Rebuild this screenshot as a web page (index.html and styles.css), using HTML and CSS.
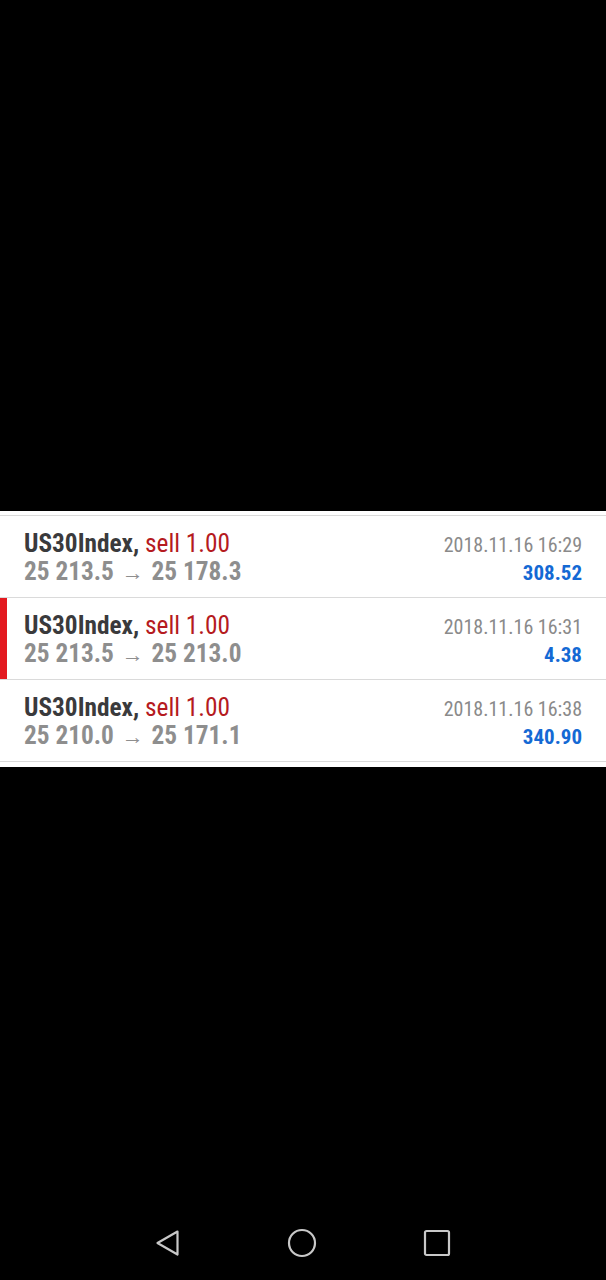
FILE: index.html
```html
<!DOCTYPE html>
<html lang="en">
<head>
  <meta charset="UTF-8" />
  <meta name="viewport" content="width=device-width, initial-scale=1.0"/>
  <title>History</title>
  <link rel="stylesheet" href="styles.css">
</head>
<body>

  <main class="screen">
    <div class="deals">
      <div class="deal">
        <div class="deal-main">
          <div class="deal-title"><b>US30Index,</b> <span class="sell">sell 1.00</span></div>
          <div class="deal-prices">25 213.5 <span class="arrow">→</span> 25 178.3</div>
        </div>
        <div class="deal-side">
          <div class="deal-time">2018.11.16 16:29</div>
          <div class="deal-profit">308.52</div>
        </div>
      </div>
      <div class="deal selected">
        <div class="deal-main">
          <div class="deal-title"><b>US30Index,</b> <span class="sell">sell 1.00</span></div>
          <div class="deal-prices">25 213.5 <span class="arrow">→</span> 25 213.0</div>
        </div>
        <div class="deal-side">
          <div class="deal-time">2018.11.16 16:31</div>
          <div class="deal-profit">4.38</div>
        </div>
      </div>
      <div class="deal">
        <div class="deal-main">
          <div class="deal-title"><b>US30Index,</b> <span class="sell">sell 1.00</span></div>
          <div class="deal-prices">25 210.0 <span class="arrow">→</span> 25 171.1</div>
        </div>
        <div class="deal-side">
          <div class="deal-time">2018.11.16 16:38</div>
          <div class="deal-profit">340.90</div>
        </div>
      </div>
    </div>
  </main>

  <nav class="navbar">
    <svg class="nav-icon" width="26" height="28" viewBox="0 0 26 28">
      <path d="M22.5 2.5 L2.5 14 L22.5 25.5 Z" />
    </svg>
    <svg class="nav-icon" width="30" height="30" viewBox="0 0 30 30">
      <circle cx="15" cy="15" r="13" />
    </svg>
    <svg class="nav-icon" width="28" height="28" viewBox="0 0 28 28">
      <rect x="2" y="2" width="24" height="24" rx="1.5" />
    </svg>
  </nav>

</body>
</html>
```

FILE: styles.css
```css
body {
  margin: 0;
  height: 1280px;
  background: #000;
  display: flex;
  flex-direction: column;
  font-family: 'Roboto Condensed', 'Liberation Sans Narrow', Roboto, sans-serif;
}

.screen {
  flex: 1;
  padding-top: 511px;
}

.deals {
  background: #fff;
  padding: 4px 0 5px;
}

.deal {
  height: 81px;
  border-top: 1px solid #dadada;
  padding: 0 24px;
  display: flex;
  justify-content: space-between;
  align-items: flex-start;
}

.deal:last-child {
  border-bottom: 1px solid #dadada;
}

.selected {
  box-shadow: inset 7px 0 0 #e3191f;
}

.deal-main {
  padding-top: 14px;
  line-height: 28px;
  font-size: 25.3px;
}

.deal-title b {
  color: #3a3a3c;
  font-weight: bold;
}

.sell {
  color: #b51a20;
}

.deal-prices {
  color: #8e8e8e;
  font-weight: bold;
}

.arrow {
  font-size: 22px;
  font-weight: normal;
  padding: 0 2px;
}

.deal-side {
  padding-top: 15px;
  line-height: 28px;
  text-align: right;
}

.deal-time {
  font-size: 20px;
  color: #8a8a8a;
}

.deal-profit {
  font-size: 21px;
  font-weight: bold;
  color: #1469d4;
}

.navbar {
  height: 74px;
  display: flex;
  justify-content: center;
  align-items: center;
  gap: 106px;
}

.nav-icon {
  fill: none;
  stroke: #c8c8c8;
  stroke-width: 2.2;
  stroke-linejoin: round;
}
```
